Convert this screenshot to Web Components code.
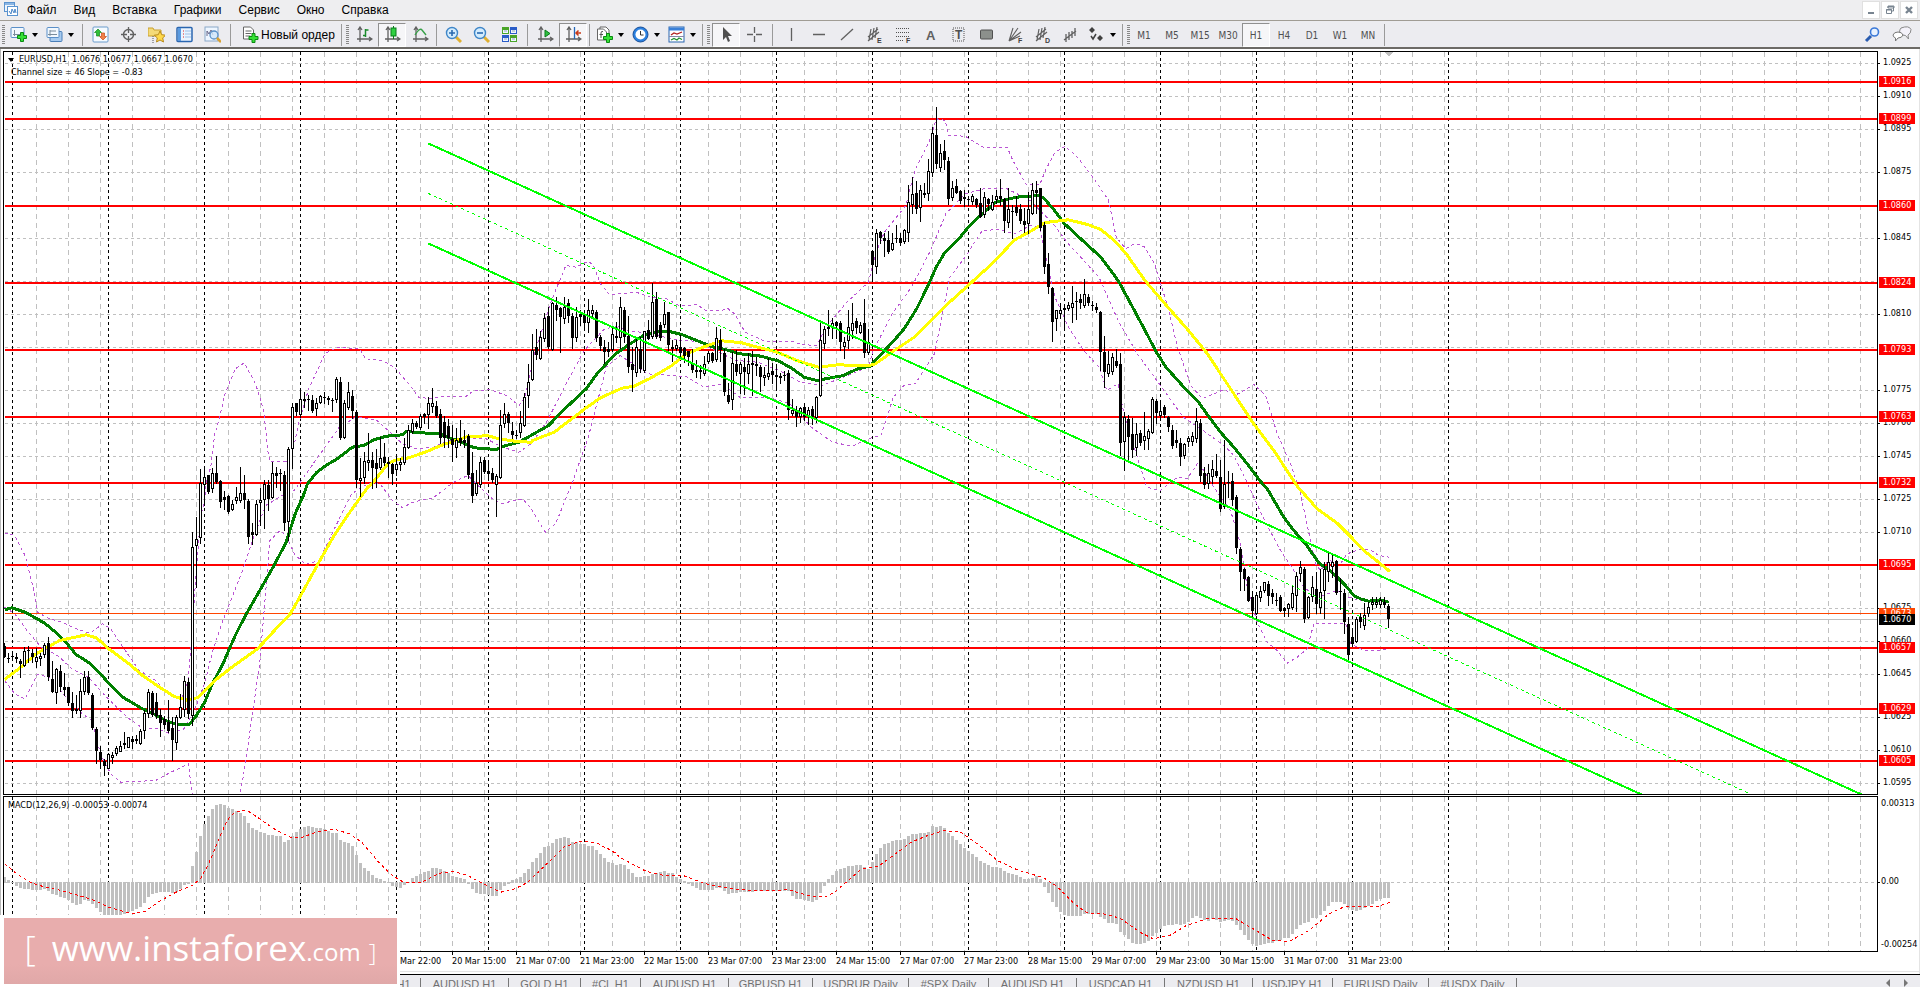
<!DOCTYPE html>
<html lang="ru">
<head>
<meta charset="utf-8">
<title>EURUSD,H1</title>
<style>
html,body{margin:0;height:100%;overflow:hidden;background:#fff}
body{font-family:"Liberation Sans",Arial,sans-serif;font-size:12px;color:#000}
</style>
</head>
<body>
<trade-terminal></trade-terminal>
<script>
const define = (name, html) => customElements.define(name, class extends HTMLElement {
  constructor() {
    super();
    this.attachShadow({mode: 'open'}).innerHTML = html;
  }
});

/* ---------- menu bar ---------- */
define('menu-bar', `
<style>
:host{display:flex;align-items:center;height:20px;background:#eeeef0;border-bottom:1px solid #a09c94}
svg{display:block}
.logo{margin:0 9px 3px 4px}
nav{display:flex;gap:17px;flex:1}
a{color:#000;text-decoration:none;font-size:12px;line-height:19px}
.win{display:flex;gap:1px;padding-right:2px}
.win button{width:18px;height:18px;padding:0;border:1px solid #e0e0e0;background:#fff;display:grid;place-items:center}
</style>
<svg class="logo" width="14" height="14"><rect x=".5" y=".5" width="10" height="9" fill="#eef5fc" stroke="#5a93cf"/><path d="M1 2h9" stroke="#8bb6e4" stroke-width="2"/><rect x="3.500" y="4.500" width="10" height="9" fill="#fff" stroke="#5a93cf"/><path d="M5 9l2 3 1-5 2 4 1-4 1 4" fill="none" stroke="#4b87c8"/></svg>
<nav><a href="#">Файл</a><a href="#">Вид</a><a href="#">Вставка</a><a href="#">Графики</a><a href="#">Сервис</a><a href="#">Окно</a><a href="#">Справка</a></nav>
<div class="win">
<button aria-label="Свернуть"><svg width="12" height="12"><path d="M3 8h6v2H3z" fill="#788490"/></svg></button>
<button aria-label="Восстановить"><svg width="12" height="12" fill="none" stroke="#788490" stroke-width="1"><path d="M4 4V2.500h5.500V7H8M4 2h6v2H4z"/><path d="M2.500 5.500h5v4h-5zM2 6h6"/></svg></button>
<button aria-label="Закрыть"><svg width="12" height="12"><path d="M3 3l6 6M9 3l-6 6" stroke="#788490" stroke-width="2.400"/></svg></button>
</div>`);

/* ---------- toolbar pieces ---------- */
define('tool-grip', `<style>:host{display:block;width:var(--w,7px);height:20px;background:repeating-linear-gradient(#888 0 1px,transparent 1px 2px) 2px 0/3px 100% no-repeat}</style>`);
define('tool-sep', `<style>:host{display:flex;justify-content:center;width:var(--w,5px);height:22px}i{width:1px;background:#9a9a9a}</style><i></i>`);
define('tool-button', `
<style>
:host{display:block;width:28px;height:24px}
button{width:100%;height:100%;box-sizing:border-box;padding:0;border:1px solid transparent;background:none;display:flex;align-items:center;justify-content:center;gap:2px;font:10px "DejaVu Sans Condensed","Liberation Sans",sans-serif;color:#505050}
:host([pressed]) button{background:#f6f6f8;border-color:#909090 #fff #fff #909090}
:host([menu]){width:36px}
:host([menu]) button::after{content:"";border:3px solid transparent;border-top:4px solid #000;border-bottom:0;margin-left:3px}
:host([wide]){width:105px}
:host([wide]) button{font:12px "Liberation Sans",sans-serif;color:#000;justify-content:flex-start;padding-left:7px}
</style><button><slot></slot></button>`);

const AX = '<path d="M4 2v14M1 13h14M2 4l2-3 2 3M13 11l3 2-3 2" fill="none" stroke="#606060" stroke-width="1.300"/>';
const PLUS = (x, y) => `<path transform="translate(${x} ${y})" d="M3.500.5h3v3h3v3h-3v3h-3v-3h-3v-3h3z" fill="#35e035" stroke="#0a8a12"/>`;
const FENCE = '<path d="M2 11L12 3M2 15L13 6M5 3L3 14M8 2L6 14M11 1L9 12" stroke="#606060" stroke-width="1.200" fill="none"/>';
const tag = (x, y, t) => `<text x="${x}" y="${y}" font-size="7" font-weight="bold" fill="#404040" font-family="Liberation Sans">${t}</text>`;
const ICONS = {
  newchart: `<rect x="1" y="1.500" width="13" height="10" rx="1" fill="#f2f8fe" stroke="#5a8fc8"/><path d="M4.500 4v6M3 8.500h8" stroke="#7a8c9c"/>${PLUS(7, 6)}`,
  profiles: '<rect x="4" y="5.500" width="12" height="10" rx="1" fill="#a7cbf0" stroke="#4a7fb8"/><rect x="1" y="1.500" width="12" height="10" rx="1" fill="#f2f8fe" stroke="#5a8fc8"/><path d="M4 4v6M2 8.500h9M4 5h6" stroke="#7a8c9c"/>',
  market: '<rect x="1" y="1" width="15" height="15" rx="1" fill="#f6fbff" stroke="#6a9ccc"/><path d="M6 3l3.500 3.500H7.500V10h-3V6.500h-2z" fill="#2fc038" stroke="#148a1c" stroke-width=".7"/><path d="M11 14l-3.500-3.500h2V7h3v3.500h2z" fill="#f08048" stroke="#c84a18" stroke-width=".7"/>',
  target: '<circle cx="8.500" cy="8.500" r="5" fill="none" stroke="#606060" stroke-width="1.400"/><path d="M8.500 1v6M8.500 10v6M1 8.500h6M10 8.500h6" stroke="#606060" stroke-width="1.300"/>',
  navigator: '<path d="M0 2h5l1 2h7v6H0z" fill="#f4da78" stroke="#c8a030"/><path d="M5 10v7" stroke="#555" stroke-dasharray="1 1"/><path d="M12 5l1.700 3.700 4 .5-3 2.700.8 4.100L12 14l-3.500 2 .8-4.100-3-2.700 4-.5z" fill="#ffd94a" stroke="#b88a1c"/>',
  terminal: '<rect x="1" y="1.500" width="15" height="14" rx="1" fill="#eaf4ff" stroke="#2a66b0" stroke-width="1.500"/><path d="M3.500 2v13" stroke="#5a9ae0" stroke-width="3"/><path d="M7 5h1M7 8h1M7 11h1" stroke="#d22"/><path d="M9 5h6M9 8h6M9 11h6" stroke="#9cc0e8"/>',
  tester: '<rect x="1" y="1" width="13" height="14" fill="#eef6ff" stroke="#8aa8c8"/><path d="M3 10V5l2 3 2-4 2 5" stroke="#668" fill="none"/><circle cx="10" cy="9" r="4" fill="#cfe6fa" fill-opacity=".8" stroke="#5a90c8" stroke-width="1.300"/><path d="M13 12l4 4" stroke="#d8a030" stroke-width="2.500"/>',
  order: `<path d="M1.500 1h7l3 3v9h-10z" fill="#fff" stroke="#666"/><path d="M3.500 5h6M3.500 7.500h6M3.500 10h5" stroke="#666"/>${PLUS(6.500, 7)}`,
  bars: AX + '<path d="M9.500 3v8M9.500 4h3M7 9.500h2.500" stroke="#1a8a2a" stroke-width="1.500"/>',
  candles: AX + '<path d="M9.500 0v13" stroke="#0a7a1a"/><rect x="7" y="2" width="5" height="8" fill="#2fd040" stroke="#0a7a1a"/>',
  line: AX + '<path d="M3 9q5-8 7-5l4 5" fill="none" stroke="#38a048" stroke-width="1.400"/>',
  zin: '<path d="M10 10l6 6" stroke="#e0b030" stroke-width="3"/><circle cx="7" cy="7" r="5.500" fill="#d4ecfd" stroke="#3f86c8" stroke-width="1.400"/><path d="M4 7h6M7 4v6" stroke="#2a6ab0" stroke-width="1.600"/>',
  zout: '<path d="M10 10l6 6" stroke="#e0b030" stroke-width="3"/><circle cx="7" cy="7" r="5.500" fill="#d4ecfd" stroke="#3f86c8" stroke-width="1.400"/><path d="M4 7h6" stroke="#2a6ab0" stroke-width="1.600"/>',
  tiles: '<path d="M1 1h7v7H1zM9 9h7v7H9z" fill="#4aa528"/><path d="M9 1h7v7H9zM1 9h7v7H1z" fill="#2a5cc8"/><path d="M2 4h5v3H2zM10 4h5v3h-5zM2 12h5v3H2zM10 12h5v3h-5z" fill="#f0f6ff"/><path d="M3 5h3M11 5h3M3 13h3M11 13h3" stroke="#90a8c0"/>',
  scroll: AX + '<path d="M8 4l5 3.500L8 11z" fill="#2fc040" stroke="#0a7a1a"/>',
  shift: AX + '<path d="M9.500 1v12" stroke="#2468b8" stroke-width="1.300"/><path d="M16 7h-5M13.500 4.500L11 7l2.500 2.500" fill="none" stroke="#c83a18" stroke-width="1.500"/>',
  indic: `<path d="M4 3V1h6l3 3v8h-3" fill="#fff" stroke="#666"/><path d="M1.500 3h6l3 3v8h-9z" fill="#fff" stroke="#666"/><path d="M5 12V7q0-2 2-1.500M3.500 8.500H7" stroke="#555" fill="none"/>${PLUS(7, 7)}`,
  clock: '<circle cx="8.500" cy="8.500" r="7.500" fill="#2a80e0" stroke="#1a4f98"/><circle cx="8.500" cy="8.500" r="5" fill="#fff"/><path d="M8.500 5v4h3" stroke="#333" fill="none"/>',
  template: '<rect x="1" y="1" width="15" height="15" fill="#fff" stroke="#2a66b0"/><path d="M1 3h15" stroke="#3a80d8" stroke-width="3"/><path d="M3 9l3-2 3 1 5-2" fill="none" stroke="#b02020" stroke-width="1.300"/><path d="M1 10.500h15" stroke="#88a"/><path d="M3 14l3-1.500 3 1.500 2-2 3 1.500" fill="none" stroke="#209030" stroke-width="1.200"/>',
  arrow: '<path d="M5 1v13l3-3 2 5 2-1-2-5h4z" fill="#505050"/>',
  cross: '<path d="M8.500 1v6M8.500 10v6M1 8.500h6M10 8.500h6" stroke="#606060" stroke-width="1.300"/>',
  vline: '<path d="M9.500 2v13" stroke="#606060" stroke-width="1.300"/>',
  hline: '<path d="M3 8.500h12" stroke="#606060" stroke-width="1.500"/>',
  trend: '<path d="M3 14L15 3" stroke="#606060" stroke-width="1.300"/>',
  chanE: FENCE + tag(11, 17, 'E'),
  fibo: '<path d="M2 2.500h14M2 6.500h14M2 10.500h14M2 14.500h8" stroke="#505050" stroke-dasharray="1 1"/>' + tag(12, 17, 'F'),
  textA: '<text x="4" y="14" font-size="13" font-weight="bold" fill="#606060" font-family="Liberation Sans">A</text>',
  textT: '<rect x="3" y="2" width="11" height="13" fill="none" stroke="#505050" stroke-dasharray="1 1"/><text x="5" y="13" font-size="12" font-weight="bold" fill="#505050" font-family="Liberation Sans">T</text>',
  rect: '<rect x="2.500" y="4" width="12" height="9" rx="1" fill="#8c908c" stroke="#505050"/>',
  fan: '<path d="M3 15L7 2M3 15L12 2M3 15L15 6M3 15L14 10" stroke="#606060" stroke-width="1.100"/>' + tag(12, 17, 'F'),
  chanD: FENCE + tag(11, 17, 'D'),
  pitch: '<path d="M2 14l12-9M4 8v8M7 6v8M10 5v7M13 2v8" stroke="#606060" stroke-width="1.300"/>',
  shapes: '<path d="M4 1l3 3-3 3-3-3zM12 9l3 3-3 3-3-3z" fill="#404040"/><path d="M3 10l2 3 3-5" fill="none" stroke="#404040" stroke-width="1.500"/>',
  search: '<path d="M2 15l5-5" stroke="#2a5cb0" stroke-width="3"/><circle cx="10.500" cy="6" r="4" fill="#e8f2ff" stroke="#3a78d8" stroke-width="1.600"/>',
  chat: '<path d="M9 2q8-3 10 1.500 0 4-3 5.500l.5 4-3-3.500q-5 0-6-3 0-3 1.500-4.500z" fill="#f4f2fa" stroke="#888"/><path d="M1 9q1-3 5-3t5 3q-1 3-5 3l-2.500 3V12Q1 11 1 9z" fill="#fff" stroke="#777"/>'
};
customElements.define('tool-icon', class extends HTMLElement {
  connectedCallback() {
    const wide = this.getAttribute('name') === 'chat' ? 21 : 17;
    this.attachShadow({mode: 'open'}).innerHTML = `<style>:host,svg{display:block}</style><svg width="${wide}" height="18" aria-hidden="true">${ICONS[this.getAttribute('name')]}</svg>`;
  }
});
const btn = (name, extra = '') => `<tool-button ${extra}><tool-icon name="${name}"></tool-icon></tool-button>`;
const row = names => names.split(' ').map(n => btn(n)).join('');
define('tool-bar', `
<style>
:host{display:flex;align-items:center;height:24px;padding-top:2px;background:#ececf0;border-bottom:2px solid #6c6a66;box-sizing:content-box}
.wide8{--w:8px}.slim{--w:6px}.thin{--w:5px}
.fill{flex:1}
.end{display:flex;padding-right:4px;gap:2px}
</style>
<tool-grip class="slim"></tool-grip>${btn('newchart', 'menu')}${btn('profiles', 'menu')}
<tool-sep class="wide8"></tool-sep>${row('market target navigator terminal tester')}
<tool-sep class="wide8"></tool-sep><tool-button wide><tool-icon name="order"></tool-icon>Новый ордер</tool-button>
<tool-sep></tool-sep><tool-grip class="slim"></tool-grip>${btn('bars')}${btn('candles', 'pressed')}${btn('line')}
<tool-sep></tool-sep>${row('zin zout tiles')}
<tool-sep class="wide8"></tool-sep>${btn('scroll')}${btn('shift', 'pressed')}
<tool-sep></tool-sep>${btn('indic', 'menu')}${btn('clock', 'menu')}${btn('template', 'menu')}
<tool-sep></tool-sep><tool-grip></tool-grip>${btn('arrow', 'pressed')}${btn('cross')}
<tool-sep class="wide8"></tool-sep>${row('vline hline trend chanE fibo textA textT rect fan chanD pitch')}${btn('shapes', 'menu')}
<tool-sep></tool-sep><tool-grip class="thin"></tool-grip>
${['M1', 'M5', 'M15', 'M30', 'H1', 'H4', 'D1', 'W1', 'MN'].map(t => `<tool-button ${t === 'H1' ? 'pressed' : ''}>${t}</tool-button>`).join('')}
<tool-sep></tool-sep><span class="fill"></span><div class="end">${row('search chat')}</div>`);

/* ---------- chart data ---------- */
/* Candles: [first x, origin y, rows "high top bottom low side"], in thirds of a pixel; one candle every 4px. */
const CANDLES = [
[4, 480, `488 497 530 532 f,518 535 538 545 f,513 528 531 540 f,518 530 538 545 f,538 542 552 590 f,500 512 556 558 o,498 510 514 545 f,508 518 530 545 f,505 530 542 560 o,520 527 533 555 o,488 495 523 530 o,470 488 590 600 f,542 597 635 637 f,565 568 635 668 o,555 572 621 632 f,580 621 629 645 f,620 622 668 675 f,635 668 692 712 f,645 686 692 700 f,598 634 690 712 o,572 592 634 642 o,572 592 640 642 f,640 645 745 747 f,742 748 812 850 f,798 815 840 864 f,838 843 858 884 f,820 822 863 865 o,815 824 830 850 o,798 805 818 825 o,783 798 812 813 o,755 790 795 805 f,770 772 800 802 o,768 778 786 805 f,765 778 784 790 f,748 752 790 792 o,690 700 750 775 o,628 635 700 712 o,632 638 705 708 f,640 665 708 715 f,688 706 728 768 f,708 718 734 745 f,660 725 752 755 f,712 745 780 840 f,705 712 785 808 o,642 680 712 715 o,588 602 688 708 o,595 606 702 714 f,155 202 706 735 o,110 178 196 320 o,-32 8 170 190 o`],
[204, 50, `1255 1282 1303 1365 o,1275 1275 1325 1330 f,1255 1270 1313 1325 o,1218 1270 1297 1300 f,1290 1292 1355 1370 f,1322 1342 1350 1378 f,1335 1337 1385 1388 f,1350 1362 1377 1380 o,1310 1342 1350 1358 o,1250 1330 1350 1355 o,1275 1330 1349 1375 f,1348 1352 1460 1480 f,1420 1447 1454 1481 f,1350 1362 1453 1455 o,1313 1350 1356 1425 o,1290 1303 1348 1435 o,1290 1305 1348 1380 f,1237 1270 1340 1345 o,1250 1270 1277 1310 f,1258 1270 1273 1320 f,1262 1275 1420 1440 f,1190 1198 1414 1470 o,1060 1070 1193 1255 o,1058 1060 1087 1095 f,1020 1048 1093 1100 o,1025 1048 1054 1070 f,1035 1048 1051 1080 f,1035 1050 1082 1085 f,1045 1060 1075 1095 o,1035 1037 1055 1060 o,1027 1040 1043 1060 f,1037 1045 1050 1062 f,1045 1050 1053 1082 f,982 988 1048 1055 o,980 997 1165 1167 f,1050 1060 1160 1165 o,997 1027 1070 1078 o,1020 1037 1082 1105 f,1080 1085 1290 1310 f,1225 1283 1290 1337 o,1205 1232 1282 1300 o,1150 1230 1236 1260 o,1205 1230 1255 1315 f,1198 1240 1256 1310 f,1160 1225 1252 1258 o,1180 1220 1240 1245 f,1220 1237 1243 1280 f,1240 1242 1272 1303 f,1215 1242 1258 1275 o,1225 1237 1243 1260 o,1165 1192 1237 1243 o,1125 1141 1192 1195 o,1108 1118 1142 1148 o,1112 1120 1132 1135 f,1093 1098 1132 1138 o`],
[424, 120, `880 882 890 910 f,830 850 882 925 o,805 850 858 875 o,842 858 888 892 f,868 882 955 968 f,888 905 955 980 f,898 918 955 980 f,915 958 975 1022 f,925 960 982 1010 o,900 955 968 975 f,930 960 970 980 f,942 948 1065 1075 f,995 1060 1128 1145 f,1050 1090 1120 1125 o,1010 1025 1093 1100 o,1012 1020 1055 1060 f,1030 1052 1063 1080 f,1045 1060 1080 1085 f,1062 1067 1093 1188 o,870 916 1072 1075 o,850 882 910 920 o,875 882 908 935 f,905 934 945 955 f,930 944 948 955 o,872 910 937 950 o,818 830 916 918 o,732 787 826 860 o,642 690 778 780 o,628 682 705 718 f,632 650 715 718 o,578 595 655 662 o,560 588 682 685 f,545 549 688 690 o,530 555 570 600 f,562 564 590 695 f,530 562 595 610 o,537 550 588 605 f,580 588 655 685 f,562 590 650 662 o,570 583 590 615 f,582 583 610 620 f,538 570 605 635 o,555 570 578 590 o,570 576 655 662 f,645 650 678 690 f,660 682 696 728 f,665 688 695 708 f,625 642 688 692 o,605 648 655 665 f,530 562 650 685 o,560 570 650 665 f,588 648 740 755 f,680 733 750 812 f,650 682 755 768 o,650 687 748 755 f,632 634 750 755 o,600 630 656 658 f,490 545 648 655 o,515 537 650 655 f,605 615 655 660 f,545 583 612 620 o,575 577 676 690 f,660 682 688 722 f,660 676 684 690 o,645 682 700 712 f,680 684 708 725 f,692 694 712 735 f,688 728 750 755 f,720 750 756 770 f,735 750 756 775 f,708 732 760 765 o,692 700 722 730 o,695 700 722 725 f,620 655 716 722 o,628 660 690 722 f,688 700 816 825 f,788 825 845 850 f,695 728 838 868 o,690 733 755 765 f,725 733 758 820 o,715 740 757 822 f,700 733 760 790 o,692 730 735 825 f,712 733 738 765 f,735 740 772 812 f,742 765 772 795 o,715 760 767 778 o,728 754 765 790 f,735 766 772 805 f,758 767 773 790 f,752 765 768 780 f,750 760 870 898 f,838 870 880 885 o,858 872 890 918 f,862 865 888 905 o,850 860 890 900 f,862 870 885 912 o,858 866 898 912 f,828 832 890 905 o,610 660 826 828 o,618 628 668 685 o,570 622 628 645 f,595 610 620 655 o,603 605 618 655 f,603 608 665 690 f,650 665 678 715 o,570 622 660 685 o,550 610 630 655 o,595 603 625 640 f,605 615 635 640 o,538 608 700 712 f,628 667 695 702 o`],
[872, 90, `480 484 524 570 f,418 430 528 550 o,423 425 443 460 f,430 445 452 498 f,423 450 485 488 f,430 460 478 480 o,405 443 448 455 f,430 443 458 465 f,418 420 452 458 o,285 335 425 452 o,262 312 342 370 o,272 308 358 368 f,285 300 352 392 o,280 308 314 320 f,208 242 308 330 o,112 128 247 258 o,50 135 222 235 f,162 190 230 242 o,150 184 210 238 f,202 213 328 342 f,272 295 320 330 o,266 287 308 310 f,300 302 333 340 f,300 320 328 348 f,318 328 330 345 f,312 318 333 342 o,325 328 345 352 f,295 340 380 382 f,305 320 372 380 o,325 328 342 360 f,315 335 358 360 o,300 318 328 340 o,268 318 328 345 f,325 328 392 425 f,295 358 397 412 o,345 362 367 445 o,318 352 368 375 f,342 358 392 398 f,355 392 405 425 f,305 358 398 428 o,280 300 368 372 o,272 300 308 368 f,293 295 413 420 f,395 405 530 550 f,488 522 590 608 f,592 595 695 752 f,660 660 685 720 o,640 660 668 685 o,650 653 660 712 f,635 645 655 660 o,588 640 652 695 o,605 632 637 688 f,612 628 638 655 f,568 612 645 650 o,612 620 640 645 f,632 645 648 660 f,640 652 660 665 f,662 667 785 840 f,738 785 845 890 f,782 822 850 858 o,790 802 843 852 o,778 812 828 832 f,790 822 1060 1095 f,965 980 1052 1140 o,975 988 1040 1112 f,985 1032 1080 1100 f,1000 1032 1072 1095 o,1020 1028 1060 1065 f,965 1038 1050 1078 o,1018 1022 1045 1078 o,922 928 1026 1030 o,928 933 968 1000 f,930 962 975 980 o,945 952 975 980 f,978 980 1012 1022 f,1005 1020 1068 1075 f,1020 1050 1058 1072 f,1045 1060 1100 1125 f,1058 1062 1095 1105 o`],
[1188, 400, `108 115 122 138 o,95 107 122 135 o,25 63 115 125 o,58 70 227 242 f,202 220 255 265 f,192 220 248 265 o,180 208 227 250 o,162 213 227 230 f,180 232 326 332 f,120 252 318 325 o,212 245 248 292 f,220 242 300 315 f,285 292 443 458 f,442 448 515 570 f,505 508 536 570 f,527 530 602 603 f,573 592 632 655 f,575 585 640 642 o,558 573 592 602 o,545 547 570 575 o,542 553 587 615 f,568 580 592 608 f,580 600 602 615 f,585 592 632 633 f,620 625 632 648 f,608 613 625 648 o,558 580 620 627 o,515 528 586 632 o,482 502 520 542 o,502 508 658 665 f,587 592 652 655 o,528 560 587 602 o,515 567 612 640 f,508 575 620 640 o,487 508 570 653 o,458 487 513 542 o,462 487 497 530 o,480 482 580 582 f,535 573 576 627 f,568 580 665 698 f,652 672 765 783 f,690 712 732 738 f,652 657 723 725 o,640 652 665 682 f,608 646 674 686 o,605 620 640 648 o,592 606 613 627 o,592 606 613 620 o,592 600 613 620 o,592 606 615 620 f,612 618 658 680 f`]];

/* Curves are kept per tile: [origin x, origin y, x scale]; y scale is 3 in every tile. */
const TILES = {a: [0, 480, 2.45], b: [0, 50, 2.45], c: [400, 120, 2.8], d: [800, 90, 2.613], e: [1000, 400, 3], m: [380, 780, 1.5077]};
const curve = (...segs) => 'M' + segs.map(s => {
  const [ox, oy, k] = TILES[s[0]];
  return s.slice(2).split(' ').map(p => {
    const [x, y] = p.split(',');
    return (ox + x / k).toFixed(1) + ',' + (oy + y / 3).toFixed(1);
  }).join('L');
}).join('L');

const GREEN = curve(
 'a 10,388 28,382 60,395 90,415 110,430 135,455 160,485 185,522 215,545 245,580 265,608 300,650 345,683 375,700 405,720 435,733 462,733 480,705 500,665 520,608 545,550 575,465 600,405 635,330 670,255 700,185 722,100 742,45',
 'b 752,1300 775,1265 800,1243 825,1225 862,1190 890,1185 915,1168 945,1157 985,1153 995,1143 1030,1147 1075,1150 1100,1162 1130,1175 1160,1192 1215,1197 1230,1188 1270,1175',
 'c 415,915 450,875 490,835 520,805 550,760 600,702 640,672 680,645 715,634 750,632 790,643 830,660 870,678 910,687 950,700 1010,707 1060,722 1095,743 1130,770 1165,780 1180,777 1240,765 1280,745 1315,737 1345,702 1380,662 1410,625 1445,565 1475,500 1500,440',
 'd 375,490 410,450 440,408 475,370 510,335 545,325 580,317 625,316 635,322 660,355 690,400 735,448 785,500 830,570 870,655 905,730 930,785 955,830 1000,888 1040,935',
 'e 620,42 660,95 700,140 740,190 780,243 800,265 850,350 880,390 915,430 955,487 985,508 1010,530 1035,555 1060,585 1080,595 1105,602 1140,598 1165,605');
const YELLOW = curve(
 'a 10,597 45,565 85,522 115,500 145,480 175,472 210,463 235,472 265,505 310,545 350,587 390,620 425,648 460,660 485,650 525,600 570,557 630,505 690,425 710,400 740,335 780,245 820,160 860,88 900,20',
 'b 910,1300 950,1238 970,1228 1000,1222 1040,1205 1090,1180 1145,1158 1195,1156 1220,1165 1265,1173 1300,1175',
 'c 370,960 430,935 480,895 520,862 560,832 620,803 655,797 700,773 760,735 800,700 860,675 900,661 955,667 1000,680 1050,693 1110,720 1170,740 1225,733 1310,736 1330,730',
 'd 245,780 300,738 380,645 440,583 500,520 560,448 600,423 640,396 700,388 750,402 785,417 820,450 850,488 900,570 960,650 1010,715 1060,785',
 'e 760,70 820,150 890,257 950,325 1010,368 1050,408 1090,450 1140,490 1168,513');
const BANDS = [
 curve('a 10,158 35,165 60,225 80,320 90,395 120,415 150,425 185,445 220,458 250,430 270,445 300,500 340,570 380,600 420,648 445,650 460,600 470,440 478,300 490,110 500,60',
  'b 505,1290 515,1250 525,1150 535,1110 550,1030 575,955 597,937 625,1000 645,1080 655,1200 660,1232 700,1232 715,1210 730,1120 755,1015 795,910 825,890 880,895 895,925 935,930 965,950 1000,1000 1025,1040 1055,1045 1085,1038 1140,1038 1160,1020 1200,1018 1240,1035 1270,1065 1285,1040 1310,900 1350,750 1385,645 1410,650 1440,632',
  'c 540,435 560,490 585,522 620,520 660,515 700,530 745,535 780,555 830,553 855,570 900,570 915,563 935,580 965,635 1020,662 1100,662 1120,672 1165,675 1190,622 1250,545 1310,485 1330,400 1355,335 1415,255 1440,150 1480,65',
  'd 355,85 378,90 388,135 430,137 480,172 540,170 555,210 590,283 625,283 640,240 665,185 690,168 720,195 765,262 805,330 825,440 850,475 875,458 900,470 925,520 960,650 985,770 1020,885 1050,925 1105,898 1140,912 1185,882 1215,915',
  'e 800,0 830,100 870,190 900,280 930,420 945,490 960,510 985,480 1020,490 1040,460 1075,448 1110,448 1135,465 1165,470'),
 curve('a 10,380 35,400 65,450 100,500 140,525 175,565 215,590 260,650 310,710 350,745 385,745 415,760 450,745 475,690 500,610 520,510 545,420 590,280 620,170 650,75 690,45',
  'b 720,1320 760,1250 830,1130 870,1100 920,1108 955,1145 985,1180 1020,1195 1060,1190 1110,1165 1190,1165 1230,1190 1270,1205 1300,1180 1340,1110 1390,990 1430,900 1480,835 1525,825',
  'c 600,620 640,630 700,640 780,660 830,662 880,690 940,720 1000,725 1060,750 1120,785 1180,795 1240,770 1310,740',
  'd 190,780 240,670 290,590 340,480 380,370 430,310 480,295 540,295 600,330 660,400 700,460 780,560 830,690 880,790 950,900 1000,980 1040,1010',
  'e 670,135 700,165 730,225 790,355 840,450 880,510 910,560 950,590 1010,570 1045,590 1080,600 1165,603'),
 curve('a 10,600 35,640 60,655 90,582 120,590 160,650 200,700 225,720 245,820 270,880 295,905 380,900 410,880 460,850 470,942'),
 curve('a 588,935 600,850 615,720 635,550 650,330 660,180 685,150 700,165 720,220 745,250 780,242 820,140 860,40 900,10 930,10 960,60 985,82 1010,65 1060,52 1110,5 1145,-15 1200,50 1225,70 1280,55 1300,85 1335,155 1360,130 1400,10',
  'b 1440,1160 1480,970',
  'c 575,740 615,705 650,730 690,760 800,768 850,800 900,790 950,830 1030,830 1090,850 1150,920 1210,965 1265,977 1310,955 1345,945 1380,830',
  'd 270,885 300,880 350,790 390,560 430,500 475,420 520,417 560,430 600,405 625,410 645,520 665,620 700,710 740,780 780,830 800,900 830,880 845,970 880,1100 905,1190 940,1200 985,1160 1010,1165 1040,1115',
  'e 640,260 690,330 720,430 740,560 770,665 800,725 830,750 860,788 890,770 920,745 940,670 980,668 1035,668 1050,730 1090,750 1165,748')];
const SIGNAL = curve(
 'a 10,1150 40,1180 75,1207 110,1220 150,1230 200,1248 235,1262 265,1280 300,1292 325,1300 355,1292 390,1262 430,1235 470,1215 490,1195 510,1150 530,1090 555,1020 575,993 605,990 635,1015 670,1045 710,1070 740,1070 780,1052 820,1047 855,1060 885,1085 930,1150 960,1185 990,1207 1030,1207 1075,1178 1110,1173 1145,1185 1175,1205 1225,1235 1255,1228 1290,1207 1330,1160 1380,1100 1420,1082 1460,1087 1510,1120',
 'm 340,200 365,235 400,272 425,284 455,284 490,310 530,325 570,331 615,328 645,345 670,350 685,335 705,300 725,265 750,258 780,215 800,185 825,165 850,150 875,155 900,190 930,240 960,268 1000,292 1020,318 1045,368 1065,397 1090,400 1115,413 1145,455 1165,475 1190,465 1215,435 1245,415 1290,415 1320,450 1345,480 1370,483 1400,450 1430,400 1455,377 1505,377 1522,365');
/* MACD bar ends, thirds of a pixel below y=780: first x of the run, then one value every 4px. */
const MACD = {
  4: '290 300 307 315 321 324 325 327 327 327 325 330 340 343 348 350 356 366 371 368 358 360 368 382 393 405 410 412 410 405 398 394 390 384 378 365 348 340 337 334 333 333 336 332 325 312 308',
  192: '258 216 168 132 108 88 75 72 75 83 88 93 98 108 128 143 150 155 160 164 166 167 168 185 179 168 156 147 142 138 140 143 145 147 153 158 160 180 185 188 198 225 248 263 272 286 294 297 303 306 314 318',
  400: '320 313 305 293 288 283 277 272 264 263 268 272 278 288 290 294 297 310 325 335 338 339 342 344 344 328 315 310 300 298 290 280 266 246 234 218 201 198 188 178 173 171 173',
  572: '185 186 192 192 197 198 210 222 235 247 250 256 253 256 268 280 291 291 288 287 281 280 277 273 278 280 290 297 303 308 314 320 326 327 327 326 320 322 330 338 336 336 333 332 332 332',
  756: '329 329 329 329 329 329 329 329 329 345 353 355 358 360 362 356 336 315 296',
  832: '284 272 266 263 258 257 255 255 260 267',
  872: '245 222 204 192 188 183 181 181 177 168 163 163 160 160 155 137 142 138 143 158 168 180 192 203 213 222 232 243 248 255 260 262 265 272 280 283 286 290 296 297 293 288',
  1040: '298 318 335 362 378 393 402 405 405 405 405 400 398 397 400 408 415 425 427 430 452 463 475 486 488 489 487 480 465 455 443 435 432 432 430 432 430 422 412 405',
  1200: '410 418 420 415 417 423 420 417 421 432 447 462 478 490 495 491 489 487 485 480 477 472 470 458 443 431 427 423 412 411 402 390 376 363 362 362 370 380 388 390 388 380 375 370 361 355 351 350'
};

const GRID_Y = [[63, '1.0925'], [96, '1.0910'], [129, '1.0895'], [172, '1.0875'], [205, ''], [238, '1.0845'], [281, ''], [314, '1.0810'], [347, ''], [390, '1.0775'], [423, '1.0760'], [456, '1.0745'], [499, '1.0725'], [532, '1.0710'], [565, ''], [608, '1.0675'], [641, '1.0660'], [674, '1.0645'], [717, '1.0625'], [750, '1.0610'], [783, '1.0595']];
const LEVELS = [[82, '1.0916'], [119, '1.0899'], [206, '1.0860'], [283, '1.0824'], [350, '1.0793'], [417, '1.0763'], [483, '1.0732'], [565, '1.0695'], [648, '1.0657'], [709, '1.0629'], [761, '1.0605']];

function verticals(y1, y2) {
  let gray = '', black = '';
  for (let x = 36; x < 1877; x += 32) gray += `M${x},${y1}V${y2}`;
  /* the day after the first weekend is one bar short */
  for (let x = 12; x < 1450; x += x === 396 ? 92 : 96) black += `M${x},${y1}V${y2}`;
  return `<path d="${gray}" stroke="#c0c0c0" stroke-dasharray="5 4"/><path d="${black}" stroke="#000" stroke-dasharray="3 3"/>`;
}
function candlePaths() {
  let wick = '', solid = '', hollow = '';
  for (const [x0, y0, rows] of CANDLES) rows.split(',').forEach((r, i) => {
    const [h, t, b, l] = r.split(' ').slice(0, 4).map(v => Math.round(y0 + v / 3));
    const x = x0 + 4 * i;
    wick += `M${x},${h - .5}V${l + .5}`;
    if (r.endsWith('o') && b - t > 1) hollow += `M${x - 1},${t}h2V${b}h-2z`;
    else solid += `M${x - 1.5},${t - .5}h3V${Math.max(b, t + 1) - .5}h-3z`;
  });
  return `<path d="${wick}" stroke="#000"/><path d="${solid}" fill="#000"/><path d="${hollow}" fill="#fff" stroke="#000"/>`;
}
function macdBars() {
  let d = '';
  for (const [x0, run] of Object.entries(MACD)) run.split(' ').forEach((v, i) => {
    const y = Math.round(780 + v / 3), x = +x0 + 4 * i;
    d += `M${x - 1.5},${Math.min(y, 882) - .5}h3V${Math.max(y, 882) + .5}h-3z`;
  });
  return `<path fill="#c0c0c0" d="${d}"/>`;
}
const hline = (y, color, extra = '') => `<line x1="4.500" x2="105%" y1="${y}" y2="${y}" stroke="${color}" ${extra}/>`;
const SVG = `svg{display:block;width:100%;height:100%;shape-rendering:crispEdges;overflow:hidden}`;
const PANE = `:host{display:block;position:relative;box-sizing:border-box;border:1px solid #000;overflow:hidden;min-height:0;background:#fff}${SVG}
svg{position:absolute;inset:0}p{position:relative;margin:0;font:9px/13px "DejaVu Sans Condensed","Liberation Sans",sans-serif;white-space:pre}`;

define('price-pane', `
<style>${PANE}
:host{padding-top:1px}
.head{display:flex;align-items:center;gap:5px;padding-left:4px}
.head i{border:3px solid transparent;border-top:4px solid #000;border-bottom:0}
.note{padding-left:7px}
</style>
<svg><g transform="translate(-3.500 -51.500)" fill="none">
${GRID_Y.map(([y]) => hline(y, '#c0c0c0', 'stroke-dasharray="3 3"')).join('')}
${verticals(51.5, 794)}
${LEVELS.map(([y]) => hline(y - .5, '#f00', 'stroke-width="2"')).join('')}
${hline(613, '#ff4500')}${hline(619, '#c0c0c0')}
${BANDS.map(d => `<path d="${d}" stroke="#ba55d3" stroke-dasharray="3 3"/>`).join('')}
<path d="${GREEN}" stroke="#008000" stroke-width="3"/>
<path d="${YELLOW}" stroke="#ff0" stroke-width="3"/>
${candlePaths()}
<path d="M428,143L1861,794M428,243L1641,794" stroke="#0f0" stroke-width="2"/>
<path d="M428,193L1749,793" stroke="#0f0" stroke-dasharray="3 3"/>
<path d="M1384,51.500h9l-4.500 5z" fill="#c0c0c0"/>
</g></svg>
<p class="head"><i></i>EURUSD,H1  1.0676 1.0677 1.0667 1.0670</p>
<p class="note">Channel size = 46 Slope = -0.83</p>`);

define('macd-pane', `
<style>${PANE} p{padding-left:4px;padding-top:2px}</style>
<svg><g transform="translate(-3.500 -796.500)" fill="none">
${verticals(796.5, 951)}
${hline(882, '#c0c0c0', 'stroke-dasharray="3 3"')}
${macdBars()}
<path d="${SIGNAL}" stroke="#f00" stroke-dasharray="3 3"/>
</g></svg>
<p>MACD(12,26,9) -0.00053 -0.00074</p>`);

/* Scale beside a pane: each mark sits at the height of its value. */
const SCALE = `:host{display:block;position:relative;overflow:hidden;min-height:0}
span{position:absolute;left:1px;top:calc(var(--y)*1px);height:11px;font:9px/11px "DejaVu Sans Condensed","Liberation Sans",sans-serif;width:36px;box-sizing:border-box;padding-left:4px}
.tick::before{content:"";position:absolute;left:-1px;top:6px;width:2px;height:1px;background:#000}
.lvl{background:#f00;color:#fff}`;
define('price-scale', `<style>${SCALE}.ask{background:#ff4500;color:#fff}.bid{background:#000;color:#fff}</style>
${GRID_Y.filter(g => g[1]).map(([y, t]) => `<span class="tick" style="--y:${y - 57}">${t}</span>`).join('')}
${LEVELS.map(([y, t]) => `<span class="lvl" style="--y:${y - 57}">${t}</span>`).join('')}
<span class="ask" style="--y:557">1.0673</span><span class="bid" style="--y:563">1.0670</span>`);
define('macd-scale', `<style>${SCALE}span{padding-left:2px;width:40px}</style>
<span style="--y:2">0.00313</span><span class="tick" style="--y:80">0.00</span><span style="--y:143">-0.00254</span>`);

define('time-scale', `
<style>
:host{display:flex;padding-left:397px;font:9px/18px "DejaVu Sans Condensed","Liberation Sans",sans-serif;overflow:hidden;box-sizing:border-box;border-bottom:1px solid #e4e4e4}
span{position:relative;flex:0 0 64px;min-width:0;white-space:nowrap}
span:first-of-type{flex-basis:52px}
span+span::before{content:"";position:absolute;left:0;top:0;width:1px;height:3px;background:#000}
</style>
${['Mar 22:00', '20 Mar 15:00', '21 Mar 07:00', '21 Mar 23:00', '22 Mar 15:00', '23 Mar 07:00', '23 Mar 23:00', '24 Mar 15:00', '27 Mar 07:00', '27 Mar 23:00', '28 Mar 15:00', '29 Mar 07:00', '29 Mar 23:00', '30 Mar 15:00', '31 Mar 07:00', '31 Mar 23:00'].map(t => `<span>${t}</span>`).join('')}`);

define('chart-window', `
<style>
:host{display:grid;grid-template-columns:1fr 42px;grid-template-rows:744fr 157fr 20px;padding:2px 0 2px 3px;box-sizing:border-box;flex:1;min-height:0;background:#fff;box-shadow:inset 1px 0 #b8b8b8,inset -1px 0 #e4e4e4}
macd-pane,macd-scale{margin-top:1px}
time-scale{grid-column:1/3}
</style>
<price-pane></price-pane><price-scale></price-scale>
<macd-pane></macd-pane><macd-scale></macd-scale>
<time-scale></time-scale>`);

/* ---------- chart tabs ---------- */
define('chart-tabs', `
<style>
:host{display:flex;height:12px;border-top:1px solid #000;background:#ececf0;padding-left:387px;overflow:hidden}
button{flex:0 0 var(--w);height:22px;margin-top:3px;padding:0;border:0;border-right:1px solid #777;background:none;font:11px/13px "Liberation Sans",sans-serif;color:#707070;display:flex;justify-content:center;white-space:nowrap;box-sizing:border-box}
.nav{margin-left:auto;display:flex;gap:14px;padding:4px 12px 0 0}
i{border:4px solid transparent;border-left:0;border-right:4px solid #777;height:0}
i+i{border:4px solid transparent;border-right:0;border-left:4px solid #777}
</style>
${[['H1', 34], ['AUDUSD H1', 88], ['GOLD H1', 72], ['#CL H1', 60], ['AUDUSD H1', 88], ['GBPUSD H1', 84], ['USDRUR Daily', 96], ['#SPX Daily', 80], ['AUDUSD H1', 88], ['USDCAD H1', 88], ['NZDUSD H1', 88], ['USDJPY H1', 80], ['EURUSD Daily', 96], ['#USDX Daily', 88]].map(([t, w]) => `<button style="--w:${w}px">${t}</button>`).join('')}
<span class="nav"><i></i><i></i></span>`);

define('site-badge', `
<style>
:host{position:absolute;left:0;bottom:0;width:400px;height:72px;box-sizing:border-box;padding:3px;padding-left:4px;background:#fff}
a{display:flex;align-items:baseline;justify-content:center;gap:8px;height:66px;background:linear-gradient(#e8adad 0 70%,#e0a8a8);color:#fff;text-decoration:none;font:35px/60px "Open Sans",sans-serif;white-space:pre}
small{font-size:24px}
b{font-weight:300;padding-right:8px}
b.s{font-size:24px;padding:0}
</style>
<a href="#"><b>[</b><span>www.instaforex<small>.com</small></span><b class="s">]</b></a>`);

define('trade-terminal', `
<style>:host{display:flex;flex-direction:column;height:100vh;position:relative;overflow:hidden}</style>
<menu-bar></menu-bar><tool-bar></tool-bar><chart-window></chart-window><chart-tabs></chart-tabs><site-badge></site-badge>`);
</script>
</body>
</html>
